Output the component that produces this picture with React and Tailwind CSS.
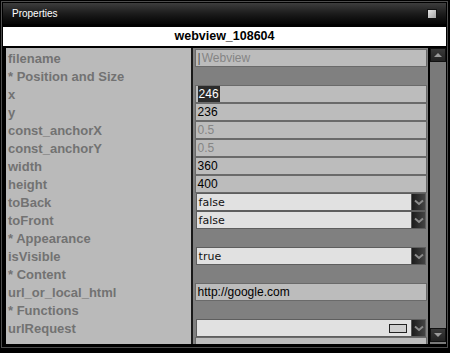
import React from 'react';

const rows = [
  { label: 'filename', kind: 'text', value: 'Webview', dim: true, caret: true },
  { label: '* Position and Size', kind: 'header' },
  { label: 'x', kind: 'text', value: '246', selected: true },
  { label: 'y', kind: 'text', value: '236' },
  { label: 'const_anchorX', kind: 'text', value: '0.5', dim: true },
  { label: 'const_anchorY', kind: 'text', value: '0.5', dim: true },
  { label: 'width', kind: 'text', value: '360' },
  { label: 'height', kind: 'text', value: '400' },
  { label: 'toBack', kind: 'select', value: 'false' },
  { label: 'toFront', kind: 'select', value: 'false' },
  { label: '* Appearance', kind: 'header' },
  { label: 'isVisible', kind: 'select', value: 'true' },
  { label: '* Content', kind: 'header' },
  { label: 'url_or_local_html', kind: 'text', value: 'http://google.com', spaced: true },
  { label: '* Functions', kind: 'header' },
  { label: 'urlRequest', kind: 'select', value: '', swatch: true },
  { label: '', kind: 'text', value: '' },
];

const Chevron = () => (
  <svg width="10" height="7" viewBox="0 0 10 7">
    <path d="M1 1.5 L5 5 L9 1.5" fill="none" stroke="#8c8c8c" strokeWidth="2" />
  </svg>
);

const ValueCell = ({ row }) => {
  if (row.kind === 'header') return <div className="h-[18px]" />;
  if (row.kind === 'select') {
    return (
      <div className="h-[18px] px-px">
        <div className="h-full flex items-center bg-[#e1e1e1] border border-[#5e5e5e]">
          <span className="flex-1 pl-[2px] text-[11px] text-[#111] font-['DejaVu_Sans',sans-serif] leading-none">{row.value}</span>
          {row.swatch && <div className="w-[18px] h-[9px] mr-[4px] bg-[#cfcfcf] border border-[#222]" />}
          <div className="w-[14px] h-[16px] flex items-center justify-center bg-gradient-to-r from-[#1c1c1c] to-[#444] border-l border-[#555]">
            <Chevron />
          </div>
        </div>
      </div>
    );
  }
  return (
    <div className={`h-[18px] flex items-center bg-[#bcbcbc] border border-[#6a6a6a] pl-[2px] text-[12px] leading-none font-['Liberation_Sans',sans-serif] ${row.dim ? 'text-[#858585]' : 'text-black'}`}>
      {row.caret && <span className="text-[#555] mr-px">|</span>}
      {row.selected ? (
        <span className="bg-[#2b2b2b] text-white px-px py-[2px]">{row.value}</span>
      ) : (
        <span>{row.value}</span>
      )}
    </div>
  );
};

const App = () => {
  return (
    <div className="w-[450px] h-[353px] bg-black overflow-hidden font-['Liberation_Sans',sans-serif]">
      <div className="ml-px mt-px w-[447px] h-[347px] border border-[#4d4d4d] p-px flex flex-col">
        <div className="h-[21px] flex items-center justify-between px-[9px] bg-gradient-to-b from-[#3d3d3d] via-[#1c1c1c] to-[#050505]">
          <span className="text-white text-[10px] leading-none">Properties</span>
          <div className="w-[10px] h-[10px] border border-[#111] bg-gradient-to-br from-[#e6e6e6] to-[#a5a5a5]" />
        </div>
        <div className="mt-[3px] h-[19px] bg-white flex items-center justify-center text-[12.5px] font-bold text-black leading-none">
          webview_108604
        </div>
        <div className="mt-[2px] flex h-[296px] overflow-hidden">
          <div className="ml-[3px] w-[185px] bg-[#bababa] pt-px overflow-hidden">
            {rows.map((r, i) => (
              <div key={i} className="h-[18px] flex items-center pl-[2px] text-[13px] font-bold text-[#727272] whitespace-nowrap leading-none">
                {r.label}
              </div>
            ))}
          </div>
          <div className="w-[2px] bg-[#1a1a1a]" />
          <div className="w-[236px] bg-[#808080] pl-[2px] pr-px pt-px overflow-hidden">
            {rows.map((r, i) => (
              <ValueCell key={i} row={r} />
            ))}
          </div>
          <div className="w-[2px] bg-black" />
          <div className="w-[16px] bg-[#7a7a7a] flex flex-col justify-between">
            <div className="h-[14px] bg-gradient-to-b from-[#3a3a3a] to-[#222] border border-[#111] flex items-center justify-center">
              <div className="w-0 h-0 border-l-[4px] border-r-[4px] border-b-[4px] border-l-transparent border-r-transparent border-b-[#9a9a9a]" />
            </div>
            <div className="h-[14px] mb-[2px] bg-gradient-to-b from-[#3a3a3a] to-[#222] border border-[#111] flex items-center justify-center">
              <div className="w-0 h-0 border-l-[4px] border-r-[4px] border-t-[4px] border-l-transparent border-r-transparent border-t-[#9a9a9a]" />
            </div>
          </div>
        </div>
      </div>
    </div>
  );
};

export default App;
